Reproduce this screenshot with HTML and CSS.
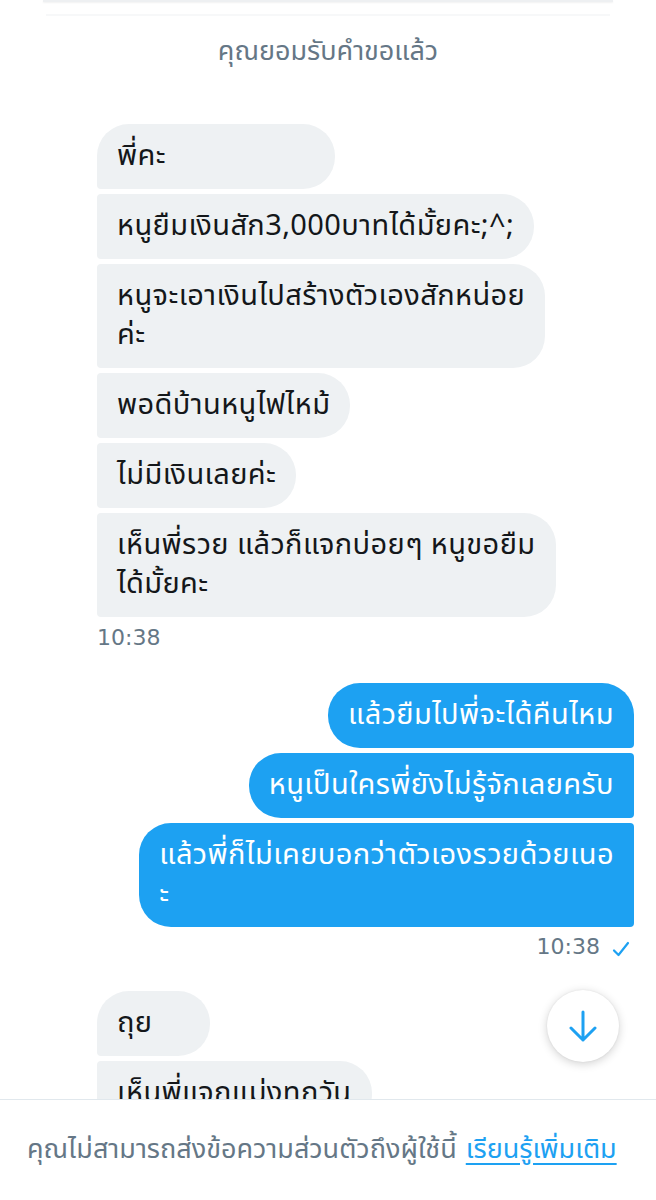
FILE: index.html
```html
<!DOCTYPE html>
<html lang="th">
<head>
<meta charset="utf-8">
<title>Messages</title>
<link rel="stylesheet" href="styles.css">
</head>
<body>
<div class="screen">
  <div class="chat">
    <div class="prev-edge"></div>
    <div class="prev-line"></div>
    <div class="system">คุณยอมรับคำขอแล้ว</div>

    <div class="group in">
      <div class="bubble wide">พี่คะ</div>
      <div class="bubble">หนูยืมเงินสัก3,000บาทได้มั้ยคะ;^;</div>
      <div class="bubble">หนูจะเอาเงินไปสร้างตัวเองสักหน่อย<br>ค่ะ</div>
      <div class="bubble">พอดีบ้านหนูไฟไหม้</div>
      <div class="bubble">ไม่มีเงินเลยค่ะ</div>
      <div class="bubble">เห็นพี่รวย แล้วก็แจกบ่อยๆ หนูขอยืม<br>ได้มั้ยคะ</div>
      <div class="time">10:38</div>
    </div>

    <div class="group out">
      <div class="bubble">แล้วยืมไปพี่จะได้คืนไหม</div>
      <div class="bubble">หนูเป็นใครพี่ยังไม่รู้จักเลยครับ</div>
      <div class="bubble">แล้วพี่ก็ไม่เคยบอกว่าตัวเองรวยด้วยเนอ<br>ะ</div>
      <div class="time">10:38
        <svg class="check" width="18" height="16" viewBox="0 0 18 16"><path d="M2 9.5 L6.5 14 L16 2" fill="none" stroke="#1da1f2" stroke-width="2.2" stroke-linecap="round" stroke-linejoin="round"/></svg>
      </div>
    </div>

    <div class="group in">
      <div class="bubble">ถุย</div>
      <div class="bubble">เห็นพี่แจกแม่งทุกวัน</div>
    </div>

    <button class="scroll-down" aria-label="เลื่อนลง">
      <svg width="30" height="34" viewBox="0 0 30 34"><path d="M15 3 V31 M3 19 L15 31 L27 19" fill="none" stroke="#1da1f2" stroke-width="3" stroke-linecap="round" stroke-linejoin="round"/></svg>
    </button>
  </div>

  <div class="footer">
    <span class="note">คุณไม่สามารถส่งข้อความส่วนตัวถึงผู้ใช้นี้</span>
    <a class="learn" href="#">เรียนรู้เพิ่มเติม</a>
  </div>
</div>
</body>
</html>
```

FILE: styles.css
```css
* { box-sizing: border-box; }

html, body {
  margin: 0;
  padding: 0;
  background: #ffffff;
}

body {
  font-family: "Noto Sans Thai", "Noto Sans", "Liberation Sans", sans-serif;
  color: #14171a;
}

.screen {
  width: 656px;
  height: 1200px;
  display: flex;
  flex-direction: column;
  overflow: hidden;
}

.chat {
  position: relative;
  height: 1099px;
  flex: none;
  overflow: hidden;
}

.prev-edge {
  margin: 0 43px;
  height: 2px;
  background: #eef0f2;
  box-shadow: 0 1px 2px rgba(0, 0, 0, 0.06);
}

.prev-line {
  margin: 12px 46px 0;
  height: 2px;
  background: #f7f8f9;
}

.system {
  margin-top: 18px;
  height: 36px;
  line-height: 36px;
  text-align: center;
  font-size: 27px;
  color: #657786;
}

.group {
  display: flex;
  flex-direction: column;
  gap: 5px;
}

.group.in {
  align-items: flex-start;
  padding-left: 97px;
}

.group.out {
  align-items: flex-end;
  padding-right: 22px;
}

.bubble {
  min-width: 113px;
  padding: 13px 20px;
  font-size: 29px;
  letter-spacing: 0.4px;
  line-height: 39px;
  white-space: nowrap;
}

.bubble.wide {
  min-width: 238px;
}

.group.in .bubble {
  background: #eef1f3;
  color: #14171a;
  border-radius: 4px 32px 32px 4px;
}

.group.in .bubble:first-child {
  border-top-left-radius: 32px;
}

.group.out .bubble {
  background: #1da1f2;
  color: #ffffff;
  border-radius: 32px 4px 4px 32px;
}

.group.out .bubble:first-child {
  border-top-right-radius: 32px;
}

.system + .group.in {
  margin-top: 54px;
}

.group.out {
  margin-top: 32px;
}

.group.out + .group.in {
  margin-top: 31px;
}

.time {
  margin-top: 3px;
  font-family: "DejaVu Sans", "Liberation Sans", sans-serif;
  font-size: 22px;
  line-height: 26px;
  color: #657786;
  display: flex;
  align-items: center;
  gap: 12px;
}

.group.out .time {
  margin-top: 2px;
  padding-right: 4px;
}

.check {
  display: block;
  margin-top: 4px;
}

.scroll-down {
  position: absolute;
  left: 547px;
  top: 990px;
  width: 72px;
  height: 72px;
  border-radius: 50%;
  border: none;
  background: #ffffff;
  box-shadow: 0 2px 10px rgba(0, 0, 0, 0.18), 0 0 2px rgba(0, 0, 0, 0.08);
  display: flex;
  align-items: center;
  justify-content: center;
  padding: 0;
}

.footer {
  flex: 1;
  border-top: 1px solid #e1e8ed;
  background: #ffffff;
  display: flex;
  align-items: center;
  padding: 0 0 2px 27px;
  gap: 9px;
  font-size: 27px;
  color: #657786;
  white-space: nowrap;
}

.learn {
  color: #1da1f2;
  text-decoration: underline;
  text-underline-offset: 5px;
}
```
